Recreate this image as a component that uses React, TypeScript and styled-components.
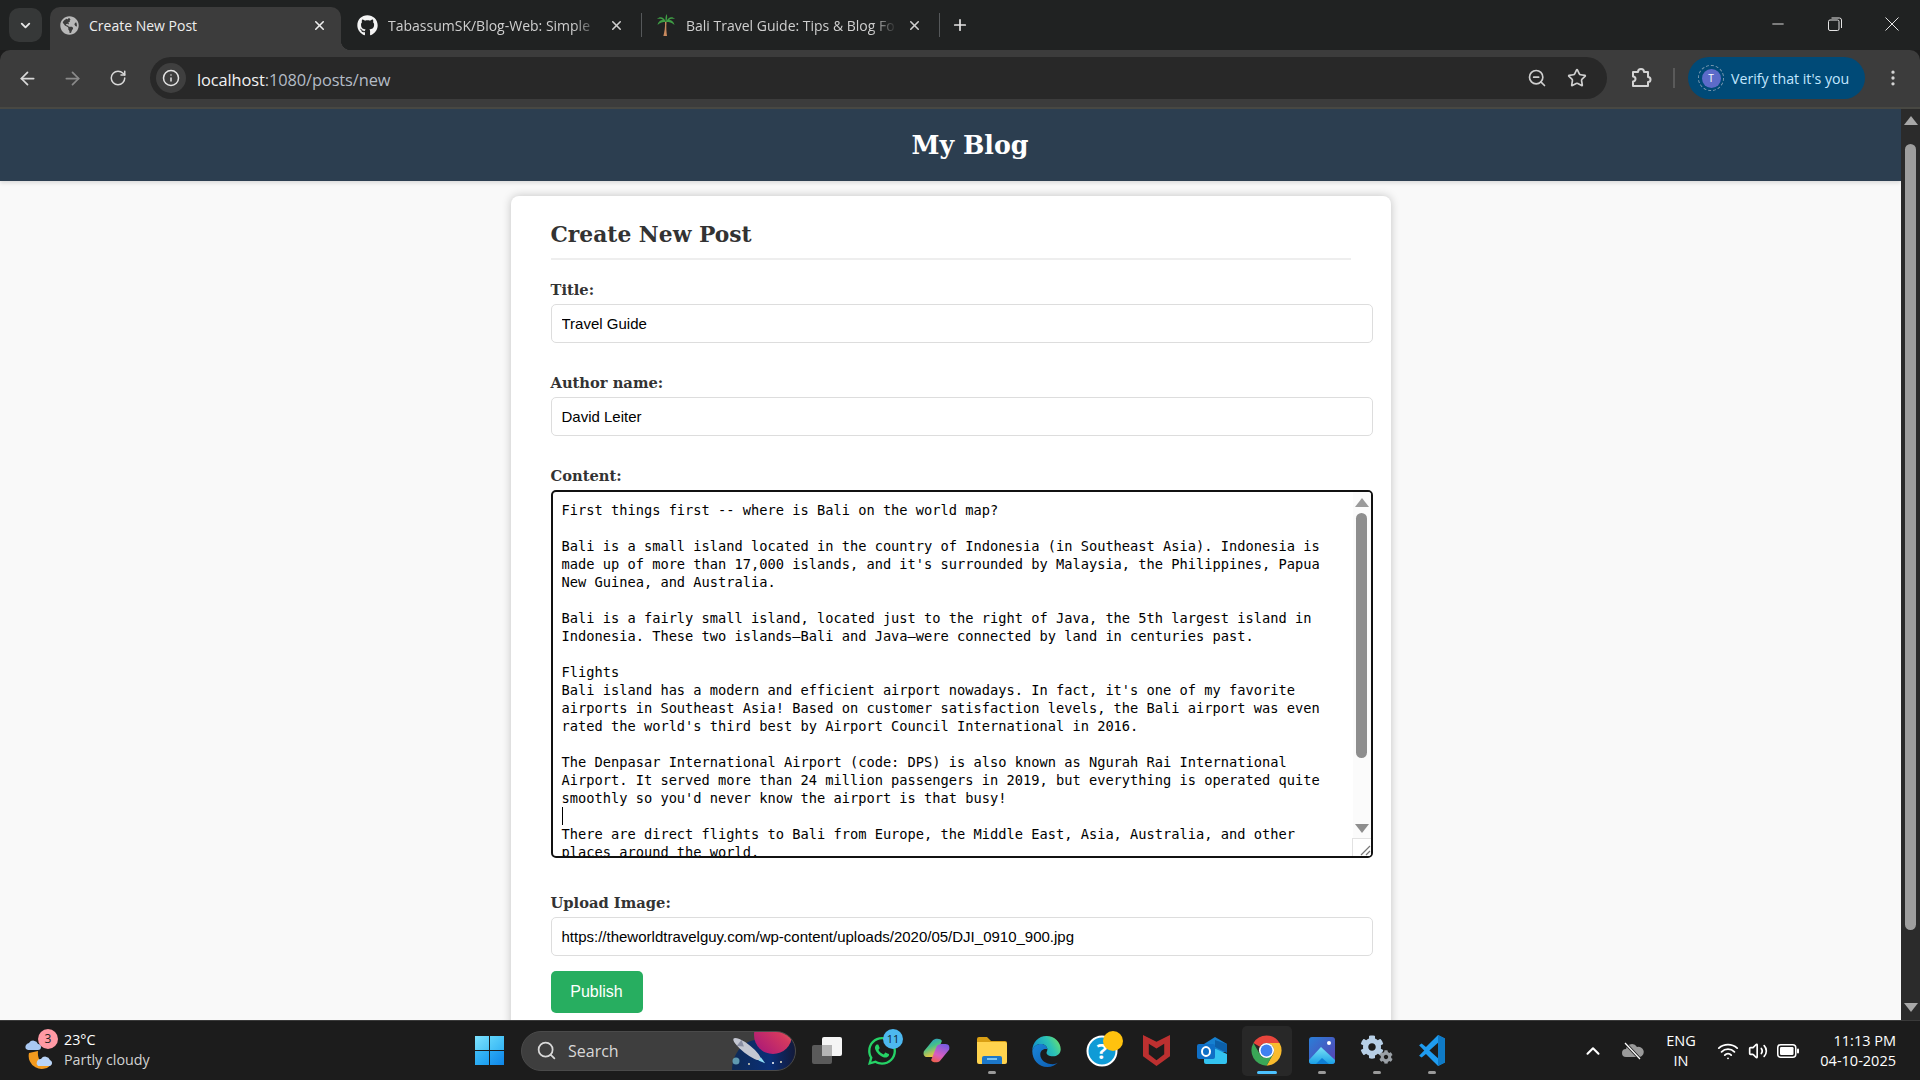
import styled, { createGlobalStyle } from "styled-components";
import {
  ArrowLeft,
  ArrowRight,
  ChevronDown,
  ChevronUp,
  EllipsisVertical,
  Info,
  Minus,
  Plus,
  RotateCw,
  Search,
  Star,
  Volume2,
  Wifi,
  X,
  ZoomOut,
} from "lucide-react";
import { FaCog, FaGithub, FaGlobeAmericas, FaWhatsapp } from "react-icons/fa";

const uiFont = `"Open Sans", "Noto Sans", sans-serif`;
const serifFont = `"DejaVu Serif", "Liberation Serif", serif`;

const GlobalStyle = createGlobalStyle`
  html, body {
    margin: 0;
    padding: 0;
    overflow: hidden;
    background: #1c1c1c;
  }
  * {
    box-sizing: border-box;
  }
`;

const Shell = styled.div`
  width: 1920px;
  height: 1080px;
  display: flex;
  flex-direction: column;
  overflow: hidden;
  font-family: ${uiFont};
`;

/* ---- browser chrome ---- */

const TabStrip = styled.div`
  height: 50px;
  flex: none;
  display: flex;
  align-items: flex-end;
  padding-left: 9px;
  background: #202222;
`;

const TabMenu = styled.div`
  width: 33px;
  height: 34px;
  margin: 0 8px 8px 0;
  border-radius: 10px;
  background: #363838;
  color: #e6e6e6;
  display: flex;
  align-items: center;
  justify-content: center;
`;

const Tab = styled.div<{ $active?: boolean; $width: number; $left: number }>`
  position: relative;
  width: ${(p) => p.$width}px;
  height: 43px;
  padding: 0 14px 7px ${(p) => p.$left}px;
  display: flex;
  align-items: center;
  gap: 10px;
  border-radius: 10px 10px 0 0;
  background: ${(p) => (p.$active ? "#3c3c3c" : "transparent")};
  color: ${(p) => (p.$active ? "#eeeeee" : "#cfcfcf")};

  ${(p) =>
    p.$active &&
    `
    &::after {
      content: "";
      position: absolute;
      right: -10px;
      bottom: 0;
      width: 10px;
      height: 10px;
      background: radial-gradient(circle at 100% 0, transparent 10px, #3c3c3c 10.5px);
    }
  `}
`;

const TabTitle = styled.span<{ $fade?: boolean }>`
  flex: 1;
  overflow: hidden;
  white-space: nowrap;
  font-size: 14px;
  ${(p) =>
    p.$fade &&
    `mask-image: linear-gradient(to right, #000 88%, transparent 100%);`}
`;

const TabDivider = styled.div`
  width: 1px;
  height: 24px;
  margin-bottom: 13px;
  background: #55585a;
`;

const NewTab = styled.div`
  width: 40px;
  height: 36px;
  margin-bottom: 7px;
  display: flex;
  align-items: center;
  justify-content: center;
  color: #e4e4e4;
`;

const WindowControls = styled.div`
  margin-left: auto;
  align-self: flex-start;
  display: flex;
  height: 48px;
`;

const WindowButton = styled.div`
  width: 57px;
  height: 48px;
  display: flex;
  align-items: center;
  justify-content: center;
  color: #e4e4e4;
`;

const Toolbar = styled.div`
  height: 59px;
  flex: none;
  display: flex;
  align-items: center;
  padding: 0 0 1px 5px;
  background: #3c3c3c;
  border-bottom: 2px solid #484843;
  border-radius: 10px 10px 0 0;
`;

const NavButton = styled.div<{ $dim?: boolean }>`
  width: 45px;
  height: 36px;
  display: flex;
  align-items: center;
  justify-content: center;
  color: ${(p) => (p.$dim ? "#8a8a8a" : "#d8d8d8")};
`;

const Omnibox = styled.div`
  flex: 1;
  height: 42px;
  margin-left: 10px;
  padding: 0 10px 0 6px;
  display: flex;
  align-items: center;
  border-radius: 21px;
  background: #282828;
`;

const SiteInfo = styled.div`
  width: 30px;
  height: 30px;
  flex: none;
  border-radius: 50%;
  background: #3f3f3f;
  color: #e4e4e4;
  display: flex;
  align-items: center;
  justify-content: center;
`;

const Url = styled.div`
  margin-left: 11px;
  flex: 1;
  padding-top: 2px;
  font-size: 16.4px;
  color: #b4bcc6;
  letter-spacing: -0.1px;
  span {
    color: #f2f2f2;
  }
`;

const OmniIcon = styled.div`
  width: 40px;
  display: flex;
  justify-content: center;
  color: #cfcfcf;
`;

const ToolbarRight = styled.div`
  width: 313px;
  flex: none;
  display: flex;
  align-items: center;
  padding-left: 22px;
  color: #d4d4d4;
`;

const ToolbarSeparator = styled.div`
  width: 2px;
  height: 20px;
  margin: 0 13px 0 20px;
  background: #5a5a5a;
`;

const VerifyPill = styled.div`
  width: 177px;
  height: 42px;
  flex: none;
  padding-left: 10px;
  display: flex;
  align-items: center;
  gap: 7px;
  border-radius: 21px;
  background: #004a77;
  color: #c2e7ff;
  font-size: 14.2px;
  white-space: nowrap;
`;

const Avatar = styled.div`
  position: relative;
  width: 26px;
  height: 26px;
  flex: none;
  border-radius: 50%;
  border: 1.5px dashed #7f9db3;
  display: flex;
  align-items: center;
  justify-content: center;
  span {
    width: 19px;
    height: 19px;
    border-radius: 50%;
    background: #5c6bc9;
    color: #fff;
    font-size: 10px;
    line-height: 19px;
    text-align: center;
  }
`;

const MenuDots = styled.div`
  margin-left: 18px;
  display: flex;
`;

/* ---- page ---- */

const Viewport = styled.div`
  flex: 1;
  min-height: 0;
  display: flex;
`;

const Page = styled.div`
  flex: 1;
  min-width: 0;
  overflow: hidden;
  background: #f9f9f9;
`;

const SiteHeader = styled.header`
  height: 72px;
  padding-left: 39px;
  display: flex;
  align-items: center;
  justify-content: center;
  background: #2c3e50;
  box-shadow: 0 2px 4px rgba(0, 0, 0, 0.12);
`;

const SiteTitle = styled.h1`
  margin: 0;
  font: 700 25.3px ${serifFont};
  color: #ffffff;
`;

const Card = styled.main`
  width: 880px;
  margin: 15px auto 0;
  padding: 24px 40px 30px;
  border-radius: 8px;
  background: #ffffff;
  box-shadow: 0 0 10px rgba(0, 0, 0, 0.22);
`;

const CardTitle = styled.h2`
  margin: 0 0 19px;
  height: 40px;
  padding-bottom: 8px;
  border-bottom: 2px solid #eeeeee;
  font: 700 21.8px/30px ${serifFont};
  color: #333333;
`;

const FieldGroup = styled.div<{ $last?: boolean }>`
  margin-bottom: ${(p) => (p.$last ? 15 : 29)}px;
`;

const FieldLabel = styled.label`
  display: block;
  height: 20px;
  margin-bottom: 5px;
  padding-top: 1px;
  font: 700 14.7px/20px ${serifFont};
  color: #333333;
`;

const TextInput = styled.input`
  display: block;
  width: 822px;
  height: 39px;
  padding: 0 10px;
  border: 1px solid #dddddd;
  border-radius: 5px;
  outline: none;
  background: #ffffff;
  font: 15px "Liberation Sans", Arial, sans-serif;
  color: #000000;
`;

const ContentBox = styled.div`
  position: relative;
  width: 822px;
  height: 368px;
  margin-bottom: 34px;
`;

const ContentArea = styled.textarea`
  display: block;
  width: 100%;
  height: 100%;
  padding: 9px 20px 0 9px;
  border: 2px solid #111111;
  border-radius: 5px;
  outline: none;
  resize: none;
  overflow: hidden;
  white-space: pre;
  background: #ffffff;
  font: 13.7px/18px "DejaVu Sans Mono", "Liberation Mono", monospace;
  color: #000000;
`;

const Caret = styled.div`
  position: absolute;
  left: 11px;
  top: 317px;
  width: 1px;
  height: 18px;
  background: #000000;
`;

const BoxScrollbar = styled.div`
  position: absolute;
  top: 2px;
  right: 2px;
  bottom: 2px;
  width: 18px;
  display: flex;
  flex-direction: column;
  align-items: center;
  background: #fbfbfb;
  border-radius: 0 3px 3px 0;
`;

const Arrow = styled.div<{ $down?: boolean; $color: string; $top?: number }>`
  flex: none;
  width: 0;
  height: 0;
  margin-top: ${(p) => p.$top ?? 0}px;
  border-left: 7px solid transparent;
  border-right: 7px solid transparent;
  ${(p) =>
    p.$down
      ? `border-top: 9px solid ${p.$color};`
      : `border-bottom: 9px solid ${p.$color};`}
`;

const BoxThumb = styled.div`
  width: 11px;
  height: 245px;
  margin: 6px 0 66px;
  border-radius: 6px;
  background: #8e8e8e;
`;

const Resizer = styled.div`
  position: absolute;
  right: 2px;
  bottom: 2px;
  width: 19px;
  height: 18px;
  border: 1px solid #e2e2e2;
  border-right: none;
  border-bottom: none;
  background: #ffffff;
  border-radius: 0 0 3px 0;
  display: flex;
  color: #777777;
`;

const PublishButton = styled.button`
  display: block;
  width: 92px;
  height: 42px;
  border: none;
  border-radius: 5px;
  background: #27ae60;
  color: #ffffff;
  font: 16px "Liberation Sans", Arial, sans-serif;
`;

const PageScrollbar = styled.div`
  width: 19px;
  flex: none;
  padding-top: 7px;
  display: flex;
  flex-direction: column;
  align-items: center;
  background: #2b2b2b;
`;

const PageThumb = styled.div`
  width: 11px;
  height: 786px;
  margin: 19px 0 73px;
  border-radius: 6px;
  background: #9e9e9e;
`;

/* ---- taskbar ---- */

const Taskbar = styled.footer`
  height: 60px;
  flex: none;
  display: flex;
  align-items: center;
  border-top: 1px solid #3a3a3a;
  background: #1c1c1c;
  color: #ffffff;
`;

const Weather = styled.div`
  width: 475px;
  flex: none;
  padding-left: 25px;
  display: flex;
  align-items: center;
  gap: 9px;
`;

const WeatherIcon = styled.div`
  position: relative;
  width: 30px;
  height: 36px;
`;

const WeatherBadge = styled.span`
  position: absolute;
  top: -4px;
  left: 13px;
  width: 20px;
  height: 20px;
  border-radius: 50%;
  background: #ff99a4;
  color: #222222;
  font-size: 12px;
  line-height: 20px;
  text-align: center;
`;

const WeatherText = styled.div`
  font-size: 14.3px;
  line-height: 20px;
  margin-top: -1px;
  small {
    display: block;
    font-size: 14.3px;
    color: #d2d2d2;
  }
`;

const StartLogo = styled.div`
  width: 29px;
  height: 29px;
  flex: none;
  margin-right: 17px;
  display: grid;
  grid-template: 1fr 1fr / 1fr 1fr;
  gap: 1.5px;
  span:nth-child(1) {
    background: linear-gradient(135deg, #7de2ff, #4cc4f5);
  }
  span:nth-child(2) {
    background: linear-gradient(135deg, #5fd4fb, #35b4f4);
  }
  span:nth-child(3) {
    background: linear-gradient(135deg, #3ebcf6, #1a9cf0);
  }
  span:nth-child(4) {
    background: linear-gradient(135deg, #2aa8f3, #0f86e8);
  }
`;

const SearchBox = styled.div`
  width: 275px;
  height: 40px;
  flex: none;
  padding-left: 14px;
  display: flex;
  align-items: center;
  gap: 11px;
  overflow: hidden;
  border-radius: 20px;
  border: 1px solid #4a4a4a;
  background: #3e3e3e;
  color: #d8d8d8;
  font-size: 16px;
  svg:last-child {
    margin-left: auto;
  }
`;

const AppTray = styled.div`
  display: flex;
  margin-left: 3px;
`;

const AppSlot = styled.div<{ $active?: boolean }>`
  position: relative;
  width: 55px;
  height: 50px;
  display: flex;
  align-items: center;
  justify-content: center;
  &::before {
    content: "";
    position: absolute;
    inset: 0 2.5px;
    border-radius: 5px;
    background: ${(p) => (p.$active ? "rgba(255,255,255,0.055)" : "transparent")};
  }
  svg {
    position: relative;
  }
`;

const RunningMark = styled.span<{ $active?: boolean }>`
  position: absolute;
  left: 50%;
  bottom: 2px;
  width: ${(p) => (p.$active ? 20 : 8)}px;
  height: 3px;
  transform: translateX(-50%);
  border-radius: 2px;
  background: ${(p) => (p.$active ? "#4cc2ff" : "#9a9a9a")};
`;

const CountBadge = styled.span`
  position: absolute;
  top: 3px;
  right: 6px;
  width: 20px;
  height: 20px;
  border-radius: 50%;
  background: #4db8f0;
  color: #10242f;
  font-size: 11px;
  line-height: 20px;
  text-align: center;
`;

const SystemTray = styled.div`
  margin-left: auto;
  padding-right: 24px;
  display: flex;
  align-items: center;
`;

const TrayItem = styled.div<{ $width: number }>`
  width: ${(p) => p.$width}px;
  display: flex;
  justify-content: center;
  color: #ffffff;
`;

const LangBlock = styled.div`
  width: 52px;
  margin-right: 5px;
  text-align: center;
  font-size: 14.5px;
  line-height: 20px;
`;

const Clock = styled.div`
  width: 91px;
  text-align: right;
  font-size: 14.5px;
  line-height: 20px;
  white-space: nowrap;
`;

/* ---- drawn icons ---- */

const PalmIcon = () => (
  <svg width="20" height="24" viewBox="0 0 20 24">
    <path d="M9 9c.3 5-.6 10-1.600 14h3.600c-.6-4-.9-9-.5-14z" fill="#c98a5e" />
    <path
      d="M10 9C8 4 4 3 1 6c3-.6 5 0 6 1-3 0-5 2-5.500 5C4 9.500 7 9 10 9zM10 9c2-5 6-6 9-3-3-.6-5 0-6 1 3 0 5 2 5.500 5C16 9.500 13 9 10 9zM10 9C9 6 9.500 3 10.500 1 11.500 3 11.500 6 10 9z"
      fill="#3f9e45"
    />
  </svg>
);

const ExtensionIcon = () => (
  <svg width="24" height="24" viewBox="0 0 24 24" fill="none" stroke="currentColor" strokeWidth="2" strokeLinejoin="round">
    <path d="M4 6h5a3 3 0 0 1 6 0h4v5a2.500 2.500 0 0 1 0 5v4H4v-4.500a2.500 2.500 0 0 0 0-5z" />
  </svg>
);

const BatteryIcon = () => (
  <svg width="22" height="14" viewBox="0 0 22 14">
    <rect x="0.750" y="0.750" width="18" height="12.500" rx="3" fill="none" stroke="#ffffff" strokeWidth="1.500" />
    <rect x="3" y="3" width="13.500" height="8" rx="1.200" fill="#ffffff" />
    <rect x="20" y="4.500" width="2" height="5" rx="1" fill="#ffffff" />
  </svg>
);

const WeatherArt = () => (
  <svg width="30" height="36" viewBox="0 0 30 36">
    <path d="M4 20a13 13 0 0 0 22 12c-9 1-14-5-13-14z" fill="#f39a1e" />
    <path
      d="M1 16a4 4 0 0 1 3-6 5 5 0 0 1 9 1 3 3 0 0 1 0 6H3z"
      fill="#a9c8f2"
    />
    <path
      d="M13 33a4 4 0 0 1 3-7 5 5 0 0 1 9 1 3.200 3.200 0 0 1 0 6z"
      fill="#b9d4f7"
    />
  </svg>
);

const SearchArt = () => (
  <svg width="66" height="38" viewBox="0 0 66 38">
    <defs>
      <linearGradient id="planet" x1="0" y1="1" x2="1" y2="0">
        <stop offset="0" stopColor="#a3147c" />
        <stop offset="0.6" stopColor="#d4385f" />
        <stop offset="1" stopColor="#f08a52" />
      </linearGradient>
      <linearGradient id="space" x1="0" y1="0" x2="1" y2="0">
        <stop offset="0" stopColor="#0e2a55" />
        <stop offset="0.6" stopColor="#0a2f78" />
        <stop offset="1" stopColor="#131a3a" />
      </linearGradient>
    </defs>
    <path d="M3 38C3 24 12 10 26 8h40v30z" fill="url(#space)" />
    <circle cx="44" cy="3" r="19" fill="url(#planet)" />
    <g transform="rotate(38 18 17)">
      <ellipse cx="18" cy="17" rx="17" ry="4.500" fill="#c4c7d2" />
      <path d="M8 13l6 4-6 4z" fill="#8a8fa3" />
      <path d="M34 15l7 2-7 2z" fill="#8fdcf5" />
    </g>
    <circle cx="7" cy="29" r="3.500" fill="#5f9ab0" />
    <circle cx="20" cy="32" r="0.900" fill="#f2e7c4" />
    <circle cx="44" cy="31" r="1" fill="#ffffff" />
    <circle cx="52" cy="30" r="1" fill="#f2e7c4" />
  </svg>
);

const TaskViewIcon = () => (
  <svg width="30" height="27" viewBox="0 0 30 27">
    <rect x="0" y="8" width="20" height="19" rx="2" fill="#5a5a5a" />
    <rect x="10" y="0" width="20" height="19" rx="2" fill="#f5f5f5" />
    <rect x="10" y="8" width="10" height="11" fill="#b5b5b5" />
  </svg>
);

const CopilotIcon = () => (
  <svg width="27" height="25" viewBox="0 0 30 34" preserveAspectRatio="none">
    <defs>
      <linearGradient id="copA" x1="0" y1="0" x2="0.400" y2="1">
        <stop offset="0" stopColor="#1f8de0" />
        <stop offset="0.5" stopColor="#45c08a" />
        <stop offset="1" stopColor="#f2c53d" />
      </linearGradient>
      <linearGradient id="copB" x1="0.600" y1="0" x2="0.200" y2="1">
        <stop offset="0" stopColor="#7a5ce0" />
        <stop offset="0.6" stopColor="#d85ec0" />
        <stop offset="1" stopColor="#f0604a" />
      </linearGradient>
    </defs>
    <path d="M11 3c2-3 9-3 10 1l-6 18c-1 3-3 4-6 4H5C1 26 0 22 1 18z" fill="url(#copA)" />
    <path d="M19 31c-2 3-9 3-10-1l6-18c1-3 3-4 6-4h4c4 0 5 4 4 8z" fill="url(#copB)" />
  </svg>
);

const FolderIcon = () => (
  <svg width="30" height="27" viewBox="0 0 30 27">
    <path d="M0 2a2 2 0 0 1 2-2h8l4 4h14a2 2 0 0 1 2 2v4H0z" fill="#d99f14" />
    <path d="M0 5h28a2 2 0 0 1 2 2v18a2 2 0 0 1-2 2H2a2 2 0 0 1-2-2z" fill="#ffd34e" />
    <path d="M5 27v-6a2 2 0 0 1 2-2h16a2 2 0 0 1 2 2v6z" fill="#1c77c9" />
    <rect x="10" y="21" width="10" height="2" fill="#7cc4f2" />
  </svg>
);

const EdgeIcon = () => (
  <svg width="31" height="32" viewBox="0 0 32 36">
    <defs>
      <linearGradient id="edgeTop" x1="0" y1="0.6" x2="1" y2="0.2">
        <stop offset="0" stopColor="#0f8ecf" />
        <stop offset="0.6" stopColor="#2cc3b5" />
        <stop offset="1" stopColor="#6fe06a" />
      </linearGradient>
      <linearGradient id="edgeBody" x1="0" y1="0" x2="1" y2="1">
        <stop offset="0" stopColor="#1a86d8" />
        <stop offset="1" stopColor="#0c5bb0" />
      </linearGradient>
    </defs>
    <path d="M0 18C0 8 7 1 16 1c9 0 16 7 16 15 0 5-4 8-9 8-4 0-7-2-7-4 0-1 1-2 1-4 0-3-3-6-7-6C5 10 1 13 0 18z" fill="url(#edgeTop)" />
    <path d="M0 18C1 13 5 10 10 10c4 0 7 3 7 6-5-1-8 2-8 6 0 6 6 11 14 11 2 0 4-1 6-2-3 3-7 5-12 5C7 36 0 28 0 18z" fill="url(#edgeBody)" />
  </svg>
);

const HelpIcon = () => (
  <svg width="42" height="40" viewBox="0 0 42 40">
    <circle cx="21" cy="20" r="14.500" fill="#0f9bd6" stroke="#ffffff" strokeWidth="2" />
    <text
      x="21"
      y="28"
      textAnchor="middle"
      fontFamily="Open Sans, sans-serif"
      fontWeight="700"
      fontSize="22"
      fill="#ffffff"
    >
      ?
    </text>
    <circle cx="32" cy="10" r="10" fill="#ffc20e" />
  </svg>
);

const McAfeeIcon = () => (
  <svg width="27" height="31" viewBox="0 0 28 32">
    <path
      d="M0 0l14 7 14-7v22l-14 10L0 22zM6 9v11l8 6 8-6V9l-8 5z"
      fill="#bd3030"
      fillRule="evenodd"
    />
  </svg>
);

const OutlookIcon = () => (
  <svg width="30" height="27" viewBox="0 0 30 27">
    <path d="M7 7L18 0l12 7v8H7z" fill="#1680d0" />
    <path d="M18 3l12 4v9l-12-6z" fill="#0c5fa8" />
    <path d="M7 12h12l11 5v8a2 2 0 0 1-2 2H9a2 2 0 0 1-2-2z" fill="#33c3f0" />
    <rect x="0" y="7" width="18" height="15" rx="2" fill="#0f6fc6" />
    <ellipse cx="9" cy="14.500" rx="4" ry="4.500" fill="none" stroke="#ffffff" strokeWidth="2" />
  </svg>
);

const ChromeIcon = () => (
  <svg width="33" height="33" viewBox="0 0 24 24">
    <path d="M12 1a11 11 0 0 1 9.500 5.500H12A5.500 5.500 0 0 0 7.200 9.200L2.500 6.500A11 11 0 0 1 12 1z" fill="#e8453c" />
    <path d="M21.500 6.500A11 11 0 0 1 12 23l4.800-8.300A5.500 5.500 0 0 0 12 6.500z" fill="#f9bb2d" />
    <path d="M12 23A11 11 0 0 1 2.500 6.500l4.700 8.200A5.500 5.500 0 0 0 12 17.500l4.800-2.800z" fill="#3aa757" />
    <circle cx="12" cy="12" r="5.500" fill="#ffffff" />
    <circle cx="12" cy="12" r="4.300" fill="#3f81f0" />
  </svg>
);

const PhotosIcon = () => (
  <svg width="26" height="27" viewBox="0 0 26 27">
    <defs>
      <linearGradient id="photoBg" x1="0" y1="0" x2="1" y2="1">
        <stop offset="0" stopColor="#2a7fd8" />
        <stop offset="1" stopColor="#5a3fb0" />
      </linearGradient>
      <linearGradient id="photoHill" x1="0" y1="0" x2="0" y2="1">
        <stop offset="0" stopColor="#7ae3f7" />
        <stop offset="1" stopColor="#1a9fe6" />
      </linearGradient>
    </defs>
    <rect width="26" height="27" rx="3" fill="url(#photoBg)" />
    <circle cx="20" cy="6" r="2" fill="#ffffff" />
    <path d="M0 23L12 10l14 13v1a3 3 0 0 1-3 3H3a3 3 0 0 1-3-3z" fill="url(#photoHill)" />
    <path d="M7 27l6-6 7 6z" fill="#0e7fd6" />
  </svg>
);

const VsCodeIcon = () => (
  <svg width="30" height="31" viewBox="0 0 30 36">
    <path d="M22 0l8 4v28l-8 4L8 22l-5 4-3-2 6-6-6-6 3-2 5 4z" fill="#1f9cf0" />
    <path d="M22 0l8 4v28l-8 4z" fill="#0f7ac6" />
    <path d="M22 9L12 18l10 9z" fill="#1c1c1c" />
  </svg>
);

const CloudOffIcon = () => (
  <svg width="22" height="18" viewBox="0 0 22 18">
    <path
      d="M4 15a4 4 0 0 1 0-8 6 6 0 0 1 11-2 5 5 0 0 1 3 10z"
      fill="#9a9a9a"
    />
    <path d="M3 1l15 16" stroke="#1c1c1c" strokeWidth="3" />
    <path d="M3 1l15 16" stroke="#ffffff" strokeWidth="1.200" />
  </svg>
);

const GripIcon = () => (
  <svg width="18" height="17" viewBox="0 0 18 17">
    <path d="M8 16L17 7M13 16l4-4" stroke="currentColor" strokeWidth="1.200" fill="none" />
  </svg>
);

const postBody = `First things first -- where is Bali on the world map?

Bali is a small island located in the country of Indonesia (in Southeast Asia). Indonesia is
made up of more than 17,000 islands, and it's surrounded by Malaysia, the Philippines, Papua
New Guinea, and Australia.

Bali is a fairly small island, located just to the right of Java, the 5th largest island in
Indonesia. These two islands—Bali and Java—were connected by land in centuries past.

Flights
Bali island has a modern and efficient airport nowadays. In fact, it's one of my favorite
airports in Southeast Asia! Based on customer satisfaction levels, the Bali airport was even
rated the world's third best by Airport Council International in 2016.

The Denpasar International Airport (code: DPS) is also known as Ngurah Rai International
Airport. It served more than 24 million passengers in 2019, but everything is operated quite
smoothly so you'd never know the airport is that busy!

There are direct flights to Bali from Europe, the Middle East, Asia, Australia, and other
places around the world.`;

export default function App() {
  return (
    <Shell>
      <GlobalStyle />
      <TabStrip>
        <TabMenu>
          <ChevronDown size={15} strokeWidth={3} />
        </TabMenu>
        <Tab $active $width={291} $left={10}>
          <FaGlobeAmericas size={19} color="#b8b8b8" />
          <TabTitle>Create New Post</TabTitle>
          <X size={15} strokeWidth={2.5} />
        </Tab>
        <Tab $width={300} $left={16}>
          <FaGithub size={21} color="#f4f4f4" />
          <TabTitle $fade>TabassumSK/Blog-Web: Simple</TabTitle>
          <X size={15} strokeWidth={2.5} style={{ marginRight: 3 }} />
        </Tab>
        <TabDivider />
        <Tab $width={297} $left={14}>
          <PalmIcon />
          <TabTitle $fade>Bali Travel Guide: Tips &amp; Blog Fo</TabTitle>
          <X size={15} strokeWidth={2.5} style={{ marginRight: 3 }} />
        </Tab>
        <TabDivider />
        <NewTab>
          <Plus size={18} strokeWidth={2.25} />
        </NewTab>
        <WindowControls>
          <WindowButton>
            <Minus size={18} strokeWidth={1.25} />
          </WindowButton>
          <WindowButton>
            <svg width="14" height="14" viewBox="0 0 14 14" fill="none" stroke="currentColor">
              <rect x="0.500" y="3" width="10.500" height="10.500" rx="1.500" />
              <path d="M3.500 1h8a2 2 0 0 1 2 2v8" />
            </svg>
          </WindowButton>
          <WindowButton>
            <svg width="14" height="14" viewBox="0 0 14 14" fill="none" stroke="currentColor">
              <path d="M0.500 0.500l13 13M13.500 0.500l-13 13" />
            </svg>
          </WindowButton>
        </WindowControls>
      </TabStrip>

      <Toolbar>
        <NavButton>
          <ArrowLeft size={21} />
        </NavButton>
        <NavButton $dim>
          <ArrowRight size={21} />
        </NavButton>
        <NavButton>
          <RotateCw size={18} />
        </NavButton>
        <Omnibox>
          <SiteInfo>
            <Info size={18} />
          </SiteInfo>
          <Url>
            <span>localhost</span>:1080/posts/new
          </Url>
          <OmniIcon>
            <ZoomOut size={20} />
          </OmniIcon>
          <OmniIcon>
            <Star size={20} />
          </OmniIcon>
        </Omnibox>
        <ToolbarRight>
          <ExtensionIcon />
          <ToolbarSeparator />
          <VerifyPill>
            <Avatar>
              <span>T</span>
            </Avatar>
            Verify that it's you
          </VerifyPill>
          <MenuDots>
            <EllipsisVertical size={20} />
          </MenuDots>
        </ToolbarRight>
      </Toolbar>

      <Viewport>
        <Page>
          <SiteHeader>
            <SiteTitle>My Blog</SiteTitle>
          </SiteHeader>
          <Card>
            <CardTitle>Create New Post</CardTitle>
            <form>
              <FieldGroup>
                <FieldLabel>Title:</FieldLabel>
                <TextInput type="text" defaultValue="Travel Guide" />
              </FieldGroup>
              <FieldGroup>
                <FieldLabel>Author name:</FieldLabel>
                <TextInput type="text" defaultValue="David Leiter" />
              </FieldGroup>
              <FieldLabel>Content:</FieldLabel>
              <ContentBox>
                <ContentArea defaultValue={postBody} spellCheck={false} />
                <Caret />
                <BoxScrollbar>
                  <Arrow $color="#9a9a9a" $top={6} />
                  <BoxThumb />
                  <Arrow $color="#8e8e8e" $down />
                </BoxScrollbar>
                <Resizer>
                  <GripIcon />
                </Resizer>
              </ContentBox>
              <FieldGroup $last>
                <FieldLabel>Upload Image:</FieldLabel>
                <TextInput
                  type="text"
                  defaultValue="https://theworldtravelguy.com/wp-content/uploads/2020/05/DJI_0910_900.jpg"
                />
              </FieldGroup>
              <PublishButton type="button">Publish</PublishButton>
            </form>
          </Card>
        </Page>
        <PageScrollbar>
          <Arrow $color="#a8a8a8" />
          <PageThumb />
          <Arrow $color="#a8a8a8" $down />
        </PageScrollbar>
      </Viewport>

      <Taskbar>
        <Weather>
          <WeatherIcon>
            <WeatherArt />
            <WeatherBadge>3</WeatherBadge>
          </WeatherIcon>
          <WeatherText>
            23°C
            <small>Partly cloudy</small>
          </WeatherText>
        </Weather>
        <StartLogo>
          <span />
          <span />
          <span />
          <span />
        </StartLogo>
        <SearchBox>
          <Search size={21} />
          Search
          <SearchArt />
        </SearchBox>
        <AppTray>
          <AppSlot>
            <TaskViewIcon />
          </AppSlot>
          <AppSlot>
            <FaWhatsapp size={32} color="#25d366" />
            <CountBadge>11</CountBadge>
          </AppSlot>
          <AppSlot>
            <CopilotIcon />
          </AppSlot>
          <AppSlot>
            <FolderIcon />
            <RunningMark />
          </AppSlot>
          <AppSlot>
            <EdgeIcon />
          </AppSlot>
          <AppSlot>
            <HelpIcon />
          </AppSlot>
          <AppSlot>
            <McAfeeIcon />
          </AppSlot>
          <AppSlot>
            <OutlookIcon />
          </AppSlot>
          <AppSlot $active>
            <ChromeIcon />
            <RunningMark $active />
          </AppSlot>
          <AppSlot>
            <PhotosIcon />
            <RunningMark />
          </AppSlot>
          <AppSlot>
            <FaCog size={24} color="#b7cfe6" style={{ marginBottom: 8 }} />
            <FaCog size={14} color="#9aa0a6" style={{ marginTop: 12, marginLeft: -5 }} />
            <RunningMark />
          </AppSlot>
          <AppSlot>
            <VsCodeIcon />
            <RunningMark />
          </AppSlot>
        </AppTray>
        <SystemTray>
          <TrayItem $width={36}>
            <ChevronUp size={22} strokeWidth={2.25} />
          </TrayItem>
          <TrayItem $width={44}>
            <CloudOffIcon />
          </TrayItem>
          <LangBlock>
            ENG
            <br />
            IN
          </LangBlock>
          <TrayItem $width={32}>
            <Wifi size={22} />
          </TrayItem>
          <TrayItem $width={27}>
            <Volume2 size={20} />
          </TrayItem>
          <TrayItem $width={34}>
            <BatteryIcon />
          </TrayItem>
          <Clock>
            11:13 PM
            <br />
            04-10-2025
          </Clock>
        </SystemTray>
      </Taskbar>
    </Shell>
  );
}
